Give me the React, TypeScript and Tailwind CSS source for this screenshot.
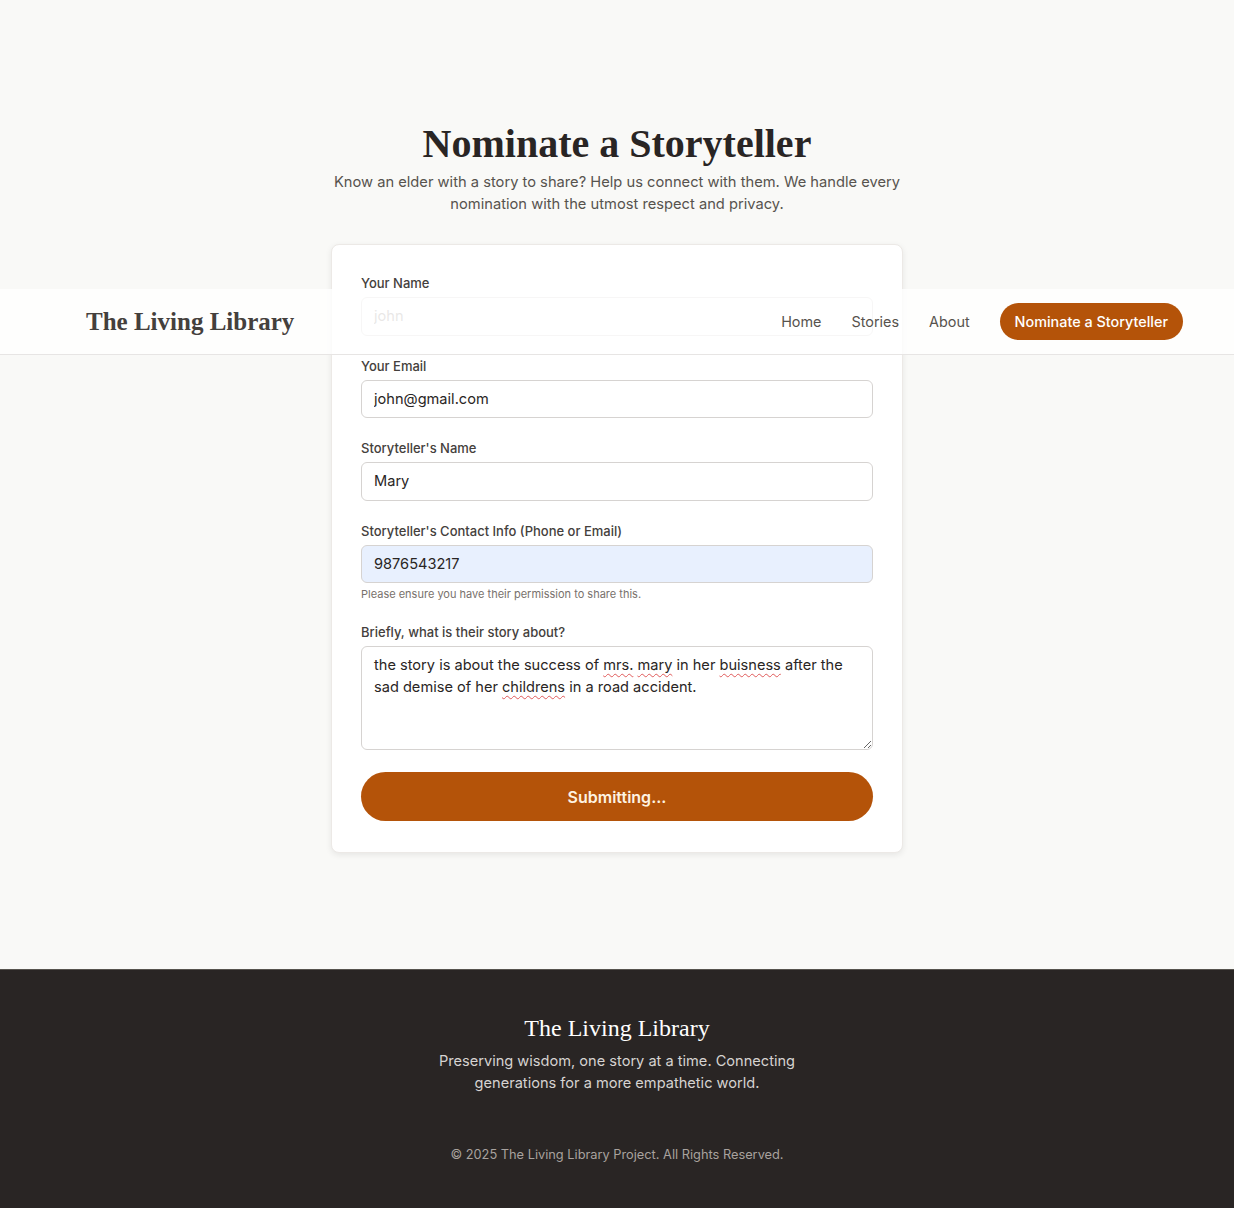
import React from 'react'

const serif = "font-['Liberation_Serif','DejaVu_Serif',serif]"

const Field = ({ label, children, hint }: { label: string; children: React.ReactNode; hint?: string }) => (
    <div>
        <label className='block text-[13px] leading-5 font-medium text-[#44403c] mb-1'>{label}</label>
        {children}
        {hint && <p className='mt-[3px] text-[11px] leading-4 text-[#78716c]'>{hint}</p>}
    </div>
)

const inputCls = 'block w-full h-[38.5px] px-3 rounded-md border border-[#d6d3d1] text-[14.6px] text-[#292524] placeholder:text-[#8f8984] outline-none'

// spellcheck squiggle, the browser won't draw it headless
const Typo = ({ children }: { children: React.ReactNode }) => (
    <span className='underline decoration-wavy decoration-[#e05a5a] decoration-1 underline-offset-[3px]'>{children}</span>
)

const App = () => {
    return (
        <div className="relative min-h-screen bg-[#f9f9f7] font-['Inter','Noto_Sans',sans-serif]">
            <header className='absolute top-[289px] left-0 right-0 z-10 h-[66px] bg-white/80 border-b border-[#e7e5e4]'>
                <div className='h-full flex items-center justify-between pl-[86px] pr-[51px]'>
                    <a className={`${serif} text-[25px] font-bold text-[#44403c]`}>The Living Library</a>
                    <nav className='flex items-center gap-[30px] text-[14.4px] text-[#57534e]'>
                        <a className='mt-[1px]'>Home</a>
                        <a className='mt-[1px]'>Stories</a>
                        <a className='mt-[1px]'>About</a>
                        <a className='h-[37px] px-[15px] flex items-center rounded-full bg-[#b45309] text-white font-medium text-[14.4px]'>Nominate a Storyteller</a>
                    </nav>
                </div>
            </header>

            <main className='pt-[122px] pb-[116px] flex flex-col items-center'>
                <h1 className={`${serif} text-[40px] leading-[44px] font-bold text-[#292524]`}>Nominate a Storyteller</h1>
                <p className='mt-[5px] max-w-[580px] text-center text-[14.7px] leading-[22px] text-[#57534e]'>
                    Know an elder with a story to share? Help us connect with them. We handle every nomination with the utmost respect and privacy.
                </p>

                <form className='mt-[29px] w-[572px] bg-white rounded-lg border border-[#ece9e6] shadow-[0_2px_6px_rgba(0,0,0,0.08)] px-[29px] pt-[28px] pb-[31px] flex flex-col gap-5'>
                    <Field label='Your Name'>
                        <input className={inputCls} placeholder='john' />
                    </Field>
                    <Field label='Your Email'>
                        <input className={inputCls} defaultValue='john@gmail.com' />
                    </Field>
                    <Field label="Storyteller's Name">
                        <input className={inputCls} defaultValue='Mary' />
                    </Field>
                    <Field label="Storyteller's Contact Info (Phone or Email)" hint='Please ensure you have their permission to share this.'>
                        <input className={`${inputCls} bg-[#e8f0fe]`} defaultValue='9876543217' />
                    </Field>
                    <Field label='Briefly, what is their story about?'>
                        <div className='w-full h-[104px] px-3 py-[7px] rounded-md border border-[#d6d3d1] text-[14.6px] leading-[22px] text-[#292524] overflow-auto resize-y'>
                            the story is about the success of <Typo>mrs.</Typo> <Typo>mary</Typo> in her <Typo>buisness</Typo> after the sad demise of her <Typo>childrens</Typo> in a road accident.
                        </div>
                    </Field>
                    <button type='button' className='mt-[2px] h-[49px] w-full rounded-full bg-[#b45309] text-[#fef3e2] text-[16px] font-semibold'>
                        Submitting...
                    </button>
                </form>
            </main>

            <footer className='bg-[#292524] border-t border-[#57534e] pt-[43px] pb-[43px] flex flex-col items-center text-center'>
                <h2 className={`${serif} text-[24px] leading-[30px] text-white`}>The Living Library</h2>
                <p className='mt-[7px] max-w-[380px] text-[14.6px] leading-[22px] text-[#d6d3d1]'>
                    Preserving wisdom, one story at a time. Connecting generations for a more empathetic world.
                </p>
                <p className='mt-[51px] text-[12.8px] leading-5 text-[#a8a29e]'>© 2025 The Living Library Project. All Rights Reserved.</p>
            </footer>
        </div>
    )
}

export default App
